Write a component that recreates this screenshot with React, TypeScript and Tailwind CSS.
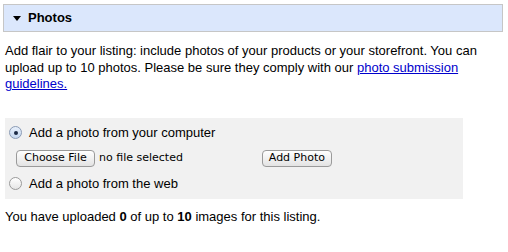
import React from "react";

export default function App() {
  return (
    <div className="w-[508px] h-[252px] bg-white text-black text-[13px] leading-[16px]" style={{ fontFamily: '"Liberation Sans", Arial, sans-serif' }}>
      <div className="pt-[4px] pl-[3px] pr-[5px]">
        <div className="h-[28px] border border-[#c6c6c6] bg-[#dbe7fc] flex items-center pl-[9px]">
          <svg width="8" height="5" viewBox="0 0 8 5" className="mr-[7px]">
            <polygon points="0,0 8,0 4,5" fill="#000" />
          </svg>
          <span className="font-bold text-[13px]">Photos</span>
        </div>
      </div>
      <p className="pl-[5px] pr-[20px] mt-[11px] leading-[16.5px]">
        Add flair to your listing: include photos of your products or your storefront. You can upload up to 10 photos. Please be sure they comply with our{" "}
        <a href="#" className="text-[#0000cc] underline">photo submission guidelines.</a>
      </p>
      <div className="ml-[5px] mt-[25px] w-[458px] h-[81px] bg-[#f1f1f1] pt-[6px] pl-[4px]">
        <label className="flex items-center h-[18px]">
          <span className="w-[13px] h-[13px] rounded-full border border-[#8a9bb5] bg-gradient-to-b from-[#e8f0fb] to-[#c5d7ef] flex items-center justify-center mr-[7px]">
            <span className="w-[4px] h-[4px] rounded-full bg-[#1c2a44]" />
          </span>
          <span>Add a photo from your computer</span>
        </label>
        <div className="flex items-center mt-[8px] h-[17px]" style={{ fontFamily: '"DejaVu Sans", sans-serif' }}>
          <span className="ml-[7px] w-[79px] h-[17px] rounded-[4px] border border-[#9a9a9a] bg-gradient-to-b from-white to-[#e3e3e3] text-[11px] flex items-center justify-center">Choose File</span>
          <span className="ml-[4px] text-[11px]">no file selected</span>
          <span className="ml-[79px] w-[70px] h-[17px] rounded-[4px] border border-[#9a9a9a] bg-gradient-to-b from-white to-[#e3e3e3] text-[11px] flex items-center justify-center">Add Photo</span>
        </div>
        <label className="flex items-center h-[18px] mt-[8px]">
          <span className="w-[13px] h-[13px] rounded-full border border-[#9a9a9a] bg-gradient-to-b from-white to-[#e6e6e6] mr-[7px]" />
          <span>Add a photo from the web</span>
        </label>
      </div>
      <p className="pl-[5px] mt-[10px]">
        You have uploaded <b>0</b> of up to <b>10</b> images for this listing.
      </p>
    </div>
  );
}
